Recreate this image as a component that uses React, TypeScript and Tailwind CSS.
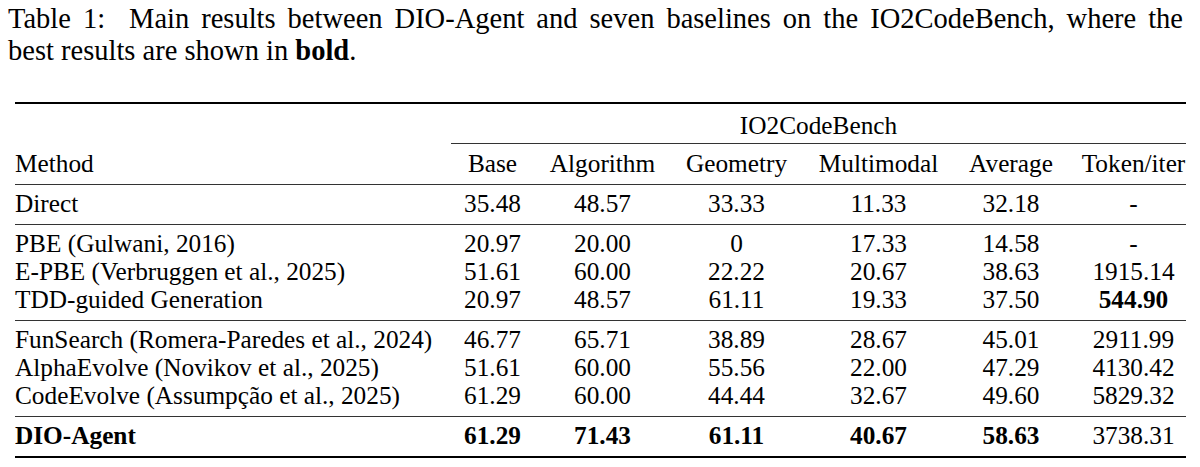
import React from "react";

type Row = { method: string; values: string[]; bold?: boolean[]; boldMethod?: boolean };

const headers = ["Base", "Algorithm", "Geometry", "Multimodal", "Average", "Token/iter"];

const groups: Row[][] = [
  [{ method: "Direct", values: ["35.48", "48.57", "33.33", "11.33", "32.18", "-"] }],
  [
    { method: "PBE (Gulwani, 2016)", values: ["20.97", "20.00", "0", "17.33", "14.58", "-"] },
    { method: "E-PBE (Verbruggen et al., 2025)", values: ["51.61", "60.00", "22.22", "20.67", "38.63", "1915.14"] },
    {
      method: "TDD-guided Generation",
      values: ["20.97", "48.57", "61.11", "19.33", "37.50", "544.90"],
      bold: [false, false, false, false, false, true],
    },
  ],
  [
    { method: "FunSearch (Romera-Paredes et al., 2024)", values: ["46.77", "65.71", "38.89", "28.67", "45.01", "2911.99"] },
    { method: "AlphaEvolve (Novikov et al., 2025)", values: ["51.61", "60.00", "55.56", "22.00", "47.29", "4130.42"] },
    { method: "CodeEvolve (Assumpção et al., 2025)", values: ["61.29", "60.00", "44.44", "32.67", "49.60", "5829.32"] },
  ],
  [
    {
      method: "DIO-Agent",
      boldMethod: true,
      values: ["61.29", "71.43", "61.11", "40.67", "58.63", "3738.31"],
      bold: [true, true, true, true, true, false],
    },
  ],
];

const cols = "grid grid-cols-[436px_83px_137px_131px_153px_112px_119px]";

const Cell = ({ children, last, bold }: { children: React.ReactNode; last?: boolean; bold?: boolean }) => (
  <div
    className={`text-center whitespace-nowrap h-[28px] leading-[28px] ${last ? "pl-[14px]" : ""} ${bold ? "font-bold" : ""}`}
  >
    {children}
  </div>
);

const App = () => {
  return (
    <div className="w-[1200px] h-[467px] bg-white text-black font-['Liberation_Serif',serif] overflow-hidden">
      {/* caption */}
      <div className="ml-[8px] w-[1175px] pt-[3px] text-[28.5px] leading-[32px]">
        <div className="text-justify [text-align-last:justify] whitespace-nowrap">
          Table 1:&nbsp; Main results between DIO-Agent and seven baselines on the IO2CodeBench, where the
        </div>
        <div>
          best results are shown in <span className="font-bold">bold</span>.
        </div>
      </div>

      {/* table */}
      <div className="ml-[15px] w-[1171px] mt-[35px] text-[25.3px] border-t-2 border-b-2 border-black">
        <div className={cols}>
          <div />
          <div className="col-span-6 text-center h-[28px] leading-[28px] mt-[7px] mb-[4px]">IO2CodeBench</div>
          <div className="col-start-2 col-span-6 border-t border-[#333]" />
        </div>
        <div className={`${cols} pt-[5px] pb-[7px] border-b border-[#333]`}>
          <div className="h-[28px] leading-[28px]">Method</div>
          {headers.map((h, i) => (
            <Cell key={h} last={i === headers.length - 1}>
              {h}
            </Cell>
          ))}
        </div>
        {groups.map((group, gi) => (
          <div
            key={gi}
            className={`pt-[4px] pb-[7px] ${gi < groups.length - 1 ? "border-b border-[#333]" : ""}`}
          >
            {group.map((row) => (
              <div key={row.method} className={cols}>
                <div className={`h-[28px] leading-[28px] whitespace-nowrap ${row.boldMethod ? "font-bold" : ""}`}>
                  {row.method}
                </div>
                {row.values.map((v, i) => (
                  <Cell key={i} last={i === row.values.length - 1} bold={row.bold?.[i]}>
                    {v}
                  </Cell>
                ))}
              </div>
            ))}
          </div>
        ))}
      </div>
    </div>
  );
};

export default App;
